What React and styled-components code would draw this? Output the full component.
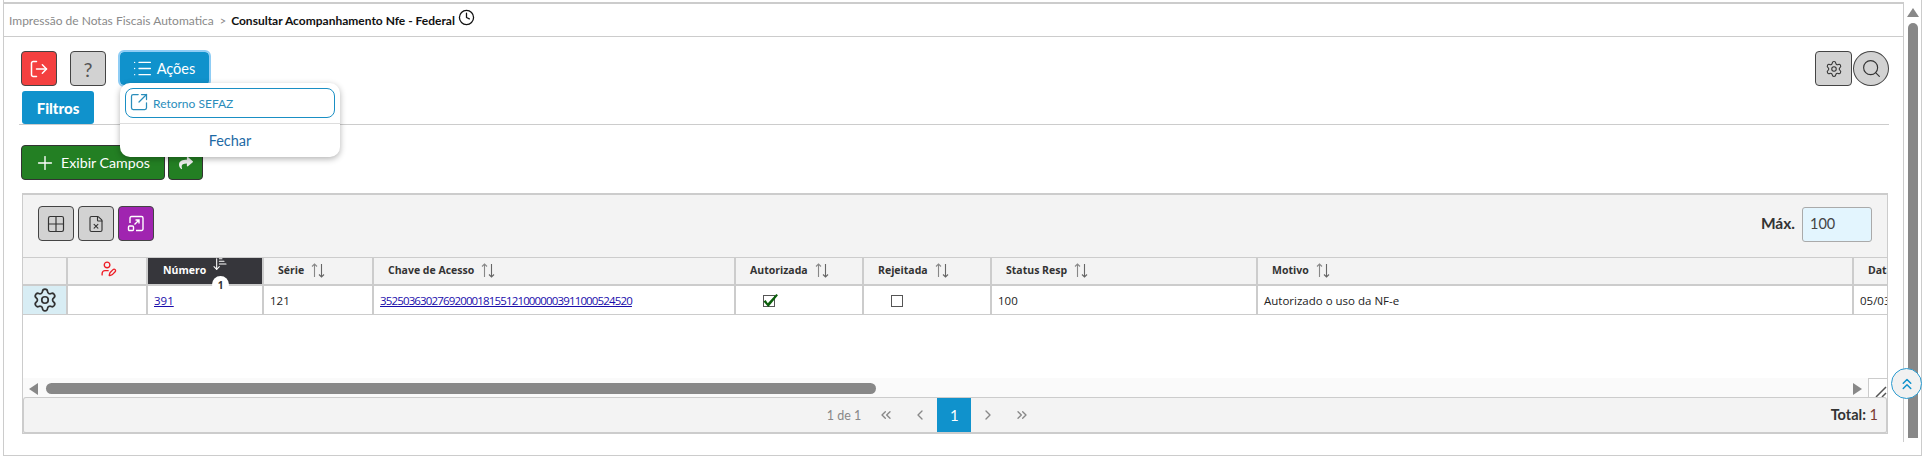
import styled, { createGlobalStyle } from 'styled-components';
import {
	LogOut, List, Plus, SquareArrowOutUpRight, Clock, Grid2x2, FileX, UserPen, Settings, Search,
	ArrowDownNarrowWide, ChevronsLeft, ChevronLeft, ChevronRight, ChevronsRight, ChevronsUp,
} from 'lucide-react';
import { FaShare } from 'react-icons/fa';

const GlobalStyle = createGlobalStyle`
	html, body { margin: 0; padding: 0; background: #fff; overflow: hidden; }
	* { box-sizing: border-box; }
`;

const Frame = styled.div`
	position: relative;
	width: 1919px;
	height: 456px;
	margin: 0 0 0 3px;
	display: flex;
	font-family: Lato, sans-serif;
	border-left: 1px solid #ccc;
	border-bottom: 1px solid #ccc;
	border-right: 1px solid #ccc;
`;
const Main = styled.div`
	width: 1900px;
	height: 440px;
	margin-top: 2px;
	border-top: 2px solid #ccc;
	border-right: 1px solid #ccc;
	display: flex;
	flex-direction: column;
`;
const Breadcrumb = styled.div`
	height: 33px;
	flex: none;
	border-bottom: 1px solid #ccc;
	padding: 0 0 0 5px;
	display: flex;
	align-items: center;
	font-size: 12px;
	color: #8a8a8a;
	gap: 5px;
	svg { margin: -5px 0 0 -2px; }
`;
const Current = styled.b`
	color: #111;
	font-weight: 700;
	font-size: 12px;
`;
const Separator = styled.span`
	font-size: 11px;
	margin: 0 0 0 1px;
`;
const Content = styled.div`
	flex: 1;
	padding: 14px 14px 0 17px;
	min-height: 0;
`;
const Toolbar = styled.div`
	display: flex;
	height: 35px;
	align-items: center;
`;
const Spacer = styled.div`
	flex: 1;
`;
const IconButton = styled.button`
	width: ${p => p.$width || 36}px;
	height: 35px;
	margin-left: ${p => p.$gap || 0}px;
	padding: 0;
	display: flex;
	align-items: center;
	justify-content: center;
	gap: 5px;
	background: ${p => p.$bg || '#d2d2d2'};
	color: ${p => p.$color || '#333'};
	border: 1px solid #444;
	border-radius: ${p => (p.$round ? '50%' : '4px')};
	font-family: Lato, sans-serif;
	font-size: 14.5px;
`;
const HelpMark = styled.span`
	font-size: 20px;
	color: #555;
`;
const ActionsWrap = styled.div`
	position: relative;
	margin-left: 14px;
`;
const ActionsButton = styled.button`
	width: 89px;
	height: 33px;
	padding: 0 2px 0 0;
	display: flex;
	align-items: center;
	justify-content: center;
	gap: 4px;
	background: #1092cc;
	color: #fff;
	border: none;
	border-radius: 4px;
	outline: 2px solid #8fcdf5;
	font-family: Lato, sans-serif;
	font-size: 14.5px;
`;
const Menu = styled.div`
	position: absolute;
	z-index: 3;
	top: 31px;
	left: 0;
	width: 220px;
	height: 74px;
	background: #fff;
	border-radius: 10px;
	box-shadow: 0 2px 6px rgba(0, 0, 0, .3);
	padding-top: 5px;
`;
const MenuItem = styled.div`
	height: 30px;
	margin: 0 5px;
	border: 1px solid #1a8fc4;
	border-radius: 8px;
	display: flex;
	align-items: center;
	gap: 4px;
	padding-left: 3px;
	color: #2a8dbb;
	font-size: 12px;
	svg { margin-top: -3px; }
`;
const MenuClose = styled.div`
	margin-top: 5px;
	border-top: 1px solid #ddd;
	height: 33px;
	display: flex;
	align-items: center;
	justify-content: center;
	color: #1d6aa5;
	font-size: 14.5px;
`;
const Tabs = styled.div`
	margin: 5px 0 20px -2px;
	height: 34px;
	border-bottom: 1px solid #ccc;
	padding-left: 3px;
`;
const Tab = styled.div`
	width: 72px;
	height: 33px;
	background: #1092cc;
	color: #fff;
	border-radius: 3px;
	display: flex;
	align-items: center;
	justify-content: center;
	font-weight: 900;
	font-size: 15px;
`;
const CaseRow = styled.div`
	display: flex;
	gap: 3px;
	height: 35px;
	margin-bottom: 13px;
`;
const GreenButton = styled(IconButton)`
	background: #237f23;
	color: #fff;
	font-size: 14.2px;
	border-color: #333;
	padding-right: ${p => p.$nudge || 0}px;
`;
const TablePanel = styled.div`
	margin-left: 1px;
	width: 1866px;
	height: 241px;
	border: 1px solid #ccc;
	border-top-width: 2px;
	display: flex;
	flex-direction: column;
`;
const PanelBar = styled.div`
	height: 62px;
	flex: none;
	background: #f3f3f3;
	padding: 11px 15px;
	display: flex;
	gap: 4px;
	align-items: flex-start;
`;
const MaxLabel = styled.b`
	font-size: 15.5px;
	color: #333;
	margin: 8px 3px 0 0;
`;
const MaxInput = styled.div`
	width: 70px;
	height: 35px;
	margin-top: 1px;
	border: 1px solid #aaa;
	border-radius: 3px;
	background: #e3f5fe;
	color: #444;
	font-size: 14.5px;
	padding: 7px 0 0 7px;
`;
const TableClip = styled.div`
	height: 121px;
	flex: none;
	overflow: hidden;
`;
const Grid = styled.table`
	table-layout: fixed;
	width: 1981px;
	border-collapse: separate;
	border-spacing: 0;
	font-family: "Open Sans", sans-serif;
	font-size: 11.5px;
	color: #222;
`;
const Th = styled.th`
	height: 29px;
	padding: 0 0 2px ${p => p.$pad ?? 14}px;
	text-align: left;
	font-size: 10.5px;
	font-weight: 700;
	white-space: nowrap;
	overflow: visible;
	position: relative;
	background: ${p => (p.$active ? '#36363b' : '#f3f3f3')};
	color: ${p => (p.$active ? '#fff' : '#333')};
	border-top: 1px solid #ccc;
	border-right: 2px solid #ccc;
	border-bottom: 2px solid #ccc;
`;
const Td = styled.td`
	height: 29px;
	padding: 0 0 0 ${p => p.$pad ?? 6}px;
	white-space: nowrap;
	background: ${p => p.$bg || '#fff'};
	text-align: ${p => p.$align || 'left'};
	border-right: 2px solid #ccc;
	border-bottom: 1px solid #ccc;
	a { color: #1a0dab; text-decoration: underline; }
`;
const AccessKey = styled.a`
	letter-spacing: -0.85px;
`;
const GearIcon = styled(Settings)`
	vertical-align: middle;
`;
const HeadInner = styled.span`
	display: inline-flex;
	align-items: center;
	gap: 7px;
`;
const SortBadge = styled.span`
	position: absolute;
	left: 64px;
	bottom: -9px;
	width: 17px;
	height: 17px;
	border-radius: 50%;
	background: #fff;
	color: #333;
	font-size: 10px;
	font-weight: 700;
	display: flex;
	align-items: center;
	justify-content: center;
	z-index: 1;
`;
const SortIcon = styled.span`
	position: absolute;
	left: 64px;
	top: -2px;
	display: flex;
	color: #fff;
`;
const Check = styled.span`
	position: relative;
	display: inline-block;
	width: 12px;
	height: 12px;
	border: 1px solid #555;
	vertical-align: middle;
	svg { position: absolute; left: -2px; top: -3px; }
`;
const HScroll = styled.div`
	height: 20px;
	flex: none;
	background: #fafafa;
	display: flex;
	padding-left: 6px;
	position: relative;
`;
const ArrowLeft = styled.span`
	width: 0;
	height: 0;
	margin-top: 5px;
	border-style: solid;
	border-width: 6px 9px 6px 0;
	border-color: transparent #888 transparent transparent;
`;
const ArrowRight = styled.span`
	width: 0;
	height: 0;
	margin: 5px 0 0 ${p => p.$left}px;
	border-style: solid;
	border-width: 6px 0 6px 9px;
	border-color: transparent transparent transparent #888;
`;
const HThumb = styled.div`
	width: 830px;
	height: 11px;
	margin: 5px 0 0 8px;
	background: #888;
	border-radius: 6px;
`;
const Resize = styled.div`
	position: absolute;
	right: 0;
	top: 0;
	width: 19px;
	height: 20px;
	background: #fff;
	border: 1px solid #ccc;
	border-bottom: none;
	border-right: none;
	display: flex;
	align-items: flex-end;
	justify-content: flex-end;
	overflow: hidden;
`;
const Pager = styled.div`
	flex: 1;
	margin-top: -1px;
	background: #f3f3f3;
	border: 1px solid #ccc;
	border-bottom-width: 2px;
	border-radius: 3px;
	padding: 0 44px 0 0;
	position: relative;
	display: flex;
	align-items: center;
	justify-content: center;
	color: #888;
	font-size: 12.5px;
`;
const PagerButton = styled.span`
	width: 34px;
	height: 34px;
	display: flex;
	align-items: center;
	justify-content: center;
	background: ${p => (p.$active ? '#1092cc' : 'transparent')};
	color: ${p => (p.$active ? '#fff' : '#888')};
	font-size: 15px;
`;
const PageCount = styled.span`
	margin-right: 8px;
`;
const Total = styled.span`
	position: absolute;
	right: 8px;
	top: 8px;
	font-size: 14.5px;
	color: #7a3b32;
	b { color: #333; }
`;
const VScroll = styled.div`
	flex: 1;
	height: 440px;
	position: relative;
	padding: 23px 0 0 4px;
`;
const VThumb = styled.div`
	width: 10px;
	height: 415px;
	background: #888;
	border-radius: 6px 6px 0 0;
`;
const ArrowUp = styled.span`
	position: absolute;
	top: 8px;
	left: 3px;
	border-style: solid;
	border-width: 0 6px 9px 6px;
	border-color: transparent transparent #888 transparent;
`;
const FloatTop = styled.div`
	position: absolute;
	z-index: 4;
	left: 1887px;
	top: 368px;
	width: 31px;
	height: 31px;
	border-radius: 50%;
	background: #f1f1f1;
	border: 1px solid #2b9bd0;
	color: #1092cc;
	display: flex;
	align-items: center;
	justify-content: center;
`;

/* up and down arrows of the sortable headers */
const SortArrows = () => (
	<svg width="14" height="15" viewBox="0 0 14 15" fill="none" stroke="#888" strokeWidth="1.1">
		<path d="M3.500 14V1M1 3.500 3.500 1 6 3.500" />
		<path d="M10.500 1v13M8 11.500l2.500 2.500 2.500-2.500" stroke="#666" />
	</svg>
);

const ExpandIcon = () => (
	<svg width="18" height="18" viewBox="0 0 18 18" fill="none" stroke="#fff" strokeWidth="1.4">
		<path d="M3 8V3a1.500 1.500 0 0 1 1.500-1.500h10A1.500 1.500 0 0 1 16 3v11a1.500 1.500 0 0 1-1.500 1.500H9" />
		<rect x="1.500" y="11" width="5" height="4.500" rx="1" />
		<path d="M7.500 9.500 12 5M8.500 5H12v3.500" />
	</svg>
);

const columns = [
	{ label: 'Série', width: 110 },
	{ label: 'Chave de Acesso', width: 362 },
	{ label: 'Autorizada', width: 128 },
	{ label: 'Rejeitada', width: 128 },
	{ label: 'Status Resp', width: 266 },
	{ label: 'Motivo', width: 596 },
	{ label: 'Data', width: 150 },
];

export default function App() {
	return (
		<>
			<GlobalStyle />
			<Frame>
				<Main>
					<Breadcrumb>
						<span>Impressão de Notas Fiscais Automatica</span>
						<Separator>&gt;</Separator>
						<Current>Consultar Acompanhamento Nfe - Federal</Current>
						<Clock size={17} color="#111" strokeWidth={1.8} />
					</Breadcrumb>
					<Content>
						<Toolbar>
							<IconButton $bg="#f44040" $color="#fff"><LogOut size={20} strokeWidth={1.8} /></IconButton>
							<IconButton $gap={13}><HelpMark>?</HelpMark></IconButton>
							<ActionsWrap>
								<ActionsButton><List size={21} strokeWidth={1.5} />Ações</ActionsButton>
								<Menu>
									<MenuItem><SquareArrowOutUpRight size={20} strokeWidth={1.5} />Retorno SEFAZ</MenuItem>
									<MenuClose>Fechar</MenuClose>
								</Menu>
							</ActionsWrap>
							<Spacer />
							<IconButton $width={37}><Settings size={18} strokeWidth={1.4} /></IconButton>
							<IconButton $round $gap={1}><Search size={21} strokeWidth={1.3} /></IconButton>
						</Toolbar>
						<Tabs><Tab>Filtros</Tab></Tabs>
						<CaseRow>
							<GreenButton $width={144} $nudge={2}><Plus size={22} strokeWidth={1.5} />Exibir Campos</GreenButton>
							<GreenButton $width={35}><FaShare size={14} color="#eee" /></GreenButton>
						</CaseRow>
						<TablePanel>
							<PanelBar>
								<IconButton><Grid2x2 size={20} strokeWidth={1.4} /></IconButton>
								<IconButton><FileX size={18} strokeWidth={1.5} /></IconButton>
								<IconButton $bg="#a024b0" $color="#fff"><ExpandIcon /></IconButton>
								<Spacer />
								<MaxLabel>Máx.</MaxLabel>
								<MaxInput>100</MaxInput>
							</PanelBar>
							<TableClip>
								<Grid>
									<colgroup>
										<col width="45" />
										<col width="80" />
										<col width="116" />
										{columns.map(c => <col key={c.label} width={c.width} />)}
									</colgroup>
									<thead>
										<tr>
											<Th $pad={0} />
											<Th $pad={32}><UserPen size={17} color="#ee1c25" strokeWidth={1.9} /></Th>
											<Th $active $pad={15}>
												Número
												<SortIcon><ArrowDownNarrowWide size={16} strokeWidth={1.6} /></SortIcon>
												<SortBadge>1</SortBadge>
											</Th>
											{columns.map(c => (
												<Th key={c.label}>
													<HeadInner>{c.label}<SortArrows /></HeadInner>
												</Th>
											))}
										</tr>
									</thead>
									<tbody>
										<tr>
											<Td $bg="#d8edf4" $align="center" $pad={0}><GearIcon size={26} color="#333" strokeWidth={1.6} /></Td>
											<Td />
											<Td><a href="#n">391</a></Td>
											<Td>121</Td>
											<Td><AccessKey href="#c">35250363027692000181551210000003911000524520</AccessKey></Td>
											<Td $pad={27}>
												<Check>
													<svg width="18" height="15" viewBox="0 0 16 14"><path d="M1 8l2-1.500 2 3L13 1l1.500 1L5.500 13z" fill="#0b5e0b" /></svg>
												</Check>
											</Td>
											<Td $pad={27}><Check /></Td>
											<Td>100</Td>
											<Td>Autorizado o uso da NF-e</Td>
											<Td>05/03/2025</Td>
										</tr>
									</tbody>
								</Grid>
							</TableClip>
							<HScroll>
								<ArrowLeft />
								<HThumb />
								<ArrowRight $left={977} />
								<Resize>
									<svg width="12" height="12" viewBox="0 0 12 12" stroke="#555" strokeWidth="1.500"><path d="M1 11 11 1M7 11l4-4" /></svg>
								</Resize>
							</HScroll>
							<Pager>
								<PageCount>1 de 1</PageCount>
								<PagerButton><ChevronsLeft size={16} /></PagerButton>
								<PagerButton><ChevronLeft size={16} /></PagerButton>
								<PagerButton $active>1</PagerButton>
								<PagerButton><ChevronRight size={16} /></PagerButton>
								<PagerButton><ChevronsRight size={16} /></PagerButton>
								<Total><b>Total:</b> 1</Total>
							</Pager>
						</TablePanel>
					</Content>
				</Main>
				<VScroll>
					<ArrowUp />
					<VThumb />
				</VScroll>
				<FloatTop><ChevronsUp size={18} /></FloatTop>
			</Frame>
		</>
	);
}
